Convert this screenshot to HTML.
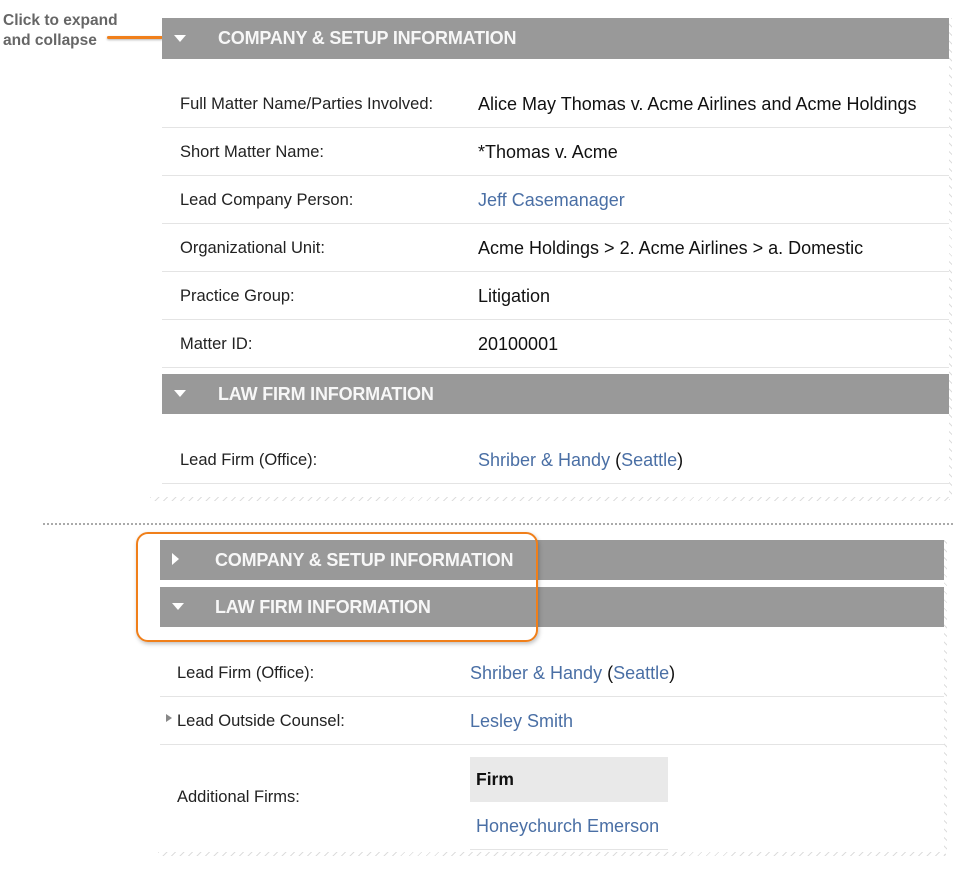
<!DOCTYPE html>
<html><head><meta charset="utf-8"><style>
body{margin:0;width:964px;height:876px;background:#fff;position:relative;font-family:"Liberation Sans",Arial,sans-serif;overflow:hidden}
.a{position:absolute;white-space:nowrap}
.hd{position:absolute;background:#999;color:#f7f7f7;font-weight:bold;font-size:18px;letter-spacing:-0.2px}
.hd span{position:absolute;top:10px}
.lb{position:absolute;font-size:16.5px;color:#222;white-space:nowrap}
.vl{position:absolute;font-size:18px;color:#111;white-space:nowrap}
.lk{color:#4a6fa5}
.sep{position:absolute;height:1px;background:#e4e4e4}
.tri-d{position:absolute;width:0;height:0;border-left:6px solid transparent;border-right:6px solid transparent;border-top:7px solid #fff}
.tri-r{position:absolute;width:0;height:0;border-top:6px solid transparent;border-bottom:6px solid transparent;border-left:7px solid #fff}
.zz{position:absolute;height:4px;background:repeating-linear-gradient(135deg,#ddd 0 1px,transparent 1px 6px)}
.zv{position:absolute;width:3px;background:repeating-linear-gradient(45deg,#ddd 0 1px,transparent 1px 6px)}
</style></head><body>
<div class="a" style="left:3px;top:11px;font-size:15.5px;font-weight:bold;color:#666;line-height:20px">Click to expand<br>and collapse</div>
<div class="a" style="left:107px;top:36px;width:56px;height:3px;background:#f07f1a;border-radius:2px;box-shadow:0 1px 2px rgba(0,0,0,.3)"></div>

<div class="hd" style="left:162px;top:18px;width:787px;height:41px"><div class="tri-d" style="left:12px;top:17px"></div><span style="left:56px">COMPANY &amp; SETUP INFORMATION</span></div>
<div class="zv" style="left:949px;top:18px;height:482px"></div>

<div class="lb" style="left:180px;top:95px">Full Matter Name/Parties Involved:</div><div class="vl" style="left:478px;top:94px">Alice May Thomas v. Acme Airlines and Acme Holdings</div>
<div class="sep" style="left:162px;top:127px;width:787px"></div>
<div class="lb" style="left:180px;top:143px">Short Matter Name:</div><div class="vl" style="left:478px;top:142px">*Thomas v. Acme</div>
<div class="sep" style="left:162px;top:175px;width:787px"></div>
<div class="lb" style="left:180px;top:191px">Lead Company Person:</div><div class="vl lk" style="left:478px;top:190px">Jeff Casemanager</div>
<div class="sep" style="left:162px;top:223px;width:787px"></div>
<div class="lb" style="left:180px;top:239px">Organizational Unit:</div><div class="vl" style="left:478px;top:238px">Acme Holdings &gt; 2. Acme Airlines &gt; a. Domestic</div>
<div class="sep" style="left:162px;top:271px;width:787px"></div>
<div class="lb" style="left:180px;top:287px">Practice Group:</div><div class="vl" style="left:478px;top:286px">Litigation</div>
<div class="sep" style="left:162px;top:319px;width:787px"></div>
<div class="lb" style="left:180px;top:335px">Matter ID:</div><div class="vl" style="left:478px;top:334px">20100001</div>
<div class="sep" style="left:162px;top:367px;width:787px"></div>

<div class="hd" style="left:162px;top:374px;width:787px;height:40px"><div class="tri-d" style="left:12px;top:16px"></div><span style="left:56px">LAW FIRM INFORMATION</span></div>
<div class="lb" style="left:180px;top:451px">Lead Firm (Office):</div><div class="vl" style="left:478px;top:450px"><span class="lk">Shriber &amp; Handy</span> (<span class="lk">Seattle</span>)</div>
<div class="sep" style="left:162px;top:483px;width:787px"></div>
<div class="zz" style="left:150px;top:497px;width:800px"></div>

<div class="a" style="left:43px;top:523px;width:910px;border-top:2px dotted #aaa"></div>

<div class="hd" style="left:160px;top:540px;width:784px;height:40px"><div class="tri-r" style="left:12px;top:13px"></div><span style="left:55px">COMPANY &amp; SETUP INFORMATION</span></div>
<div class="hd" style="left:160px;top:587px;width:784px;height:40px"><div class="tri-d" style="left:12px;top:16px"></div><span style="left:55px">LAW FIRM INFORMATION</span></div>
<div class="a" style="left:136px;top:532px;width:398px;height:106px;border:2px solid #f07f1a;border-radius:12px;box-shadow:1px 2px 4px rgba(0,0,0,.25)"></div>
<div class="zv" style="left:944px;top:540px;height:315px"></div>

<div class="lb" style="left:177px;top:664px">Lead Firm (Office):</div><div class="vl" style="left:470px;top:663px"><span class="lk">Shriber &amp; Handy</span> (<span class="lk">Seattle</span>)</div>
<div class="sep" style="left:160px;top:696px;width:784px"></div>
<div class="a" style="left:166px;top:714px;width:0;height:0;border-top:4px solid transparent;border-bottom:4px solid transparent;border-left:6px solid #888"></div>
<div class="lb" style="left:177px;top:712px">Lead Outside Counsel:</div><div class="vl lk" style="left:470px;top:711px">Lesley Smith</div>
<div class="sep" style="left:160px;top:744px;width:784px"></div>
<div class="lb" style="left:177px;top:788px">Additional Firms:</div>
<div class="a" style="left:470px;top:757px;width:198px;height:45px;background:#e9e9e9"></div>
<div class="a" style="left:476px;top:769px;font-size:17.5px;font-weight:bold;color:#111">Firm</div>
<div class="vl lk" style="left:476px;top:816px">Honeychurch Emerson</div>
<div class="sep" style="left:470px;top:849px;width:198px"></div>
<div class="zz" style="left:158px;top:852px;width:788px"></div>
</body></html>
